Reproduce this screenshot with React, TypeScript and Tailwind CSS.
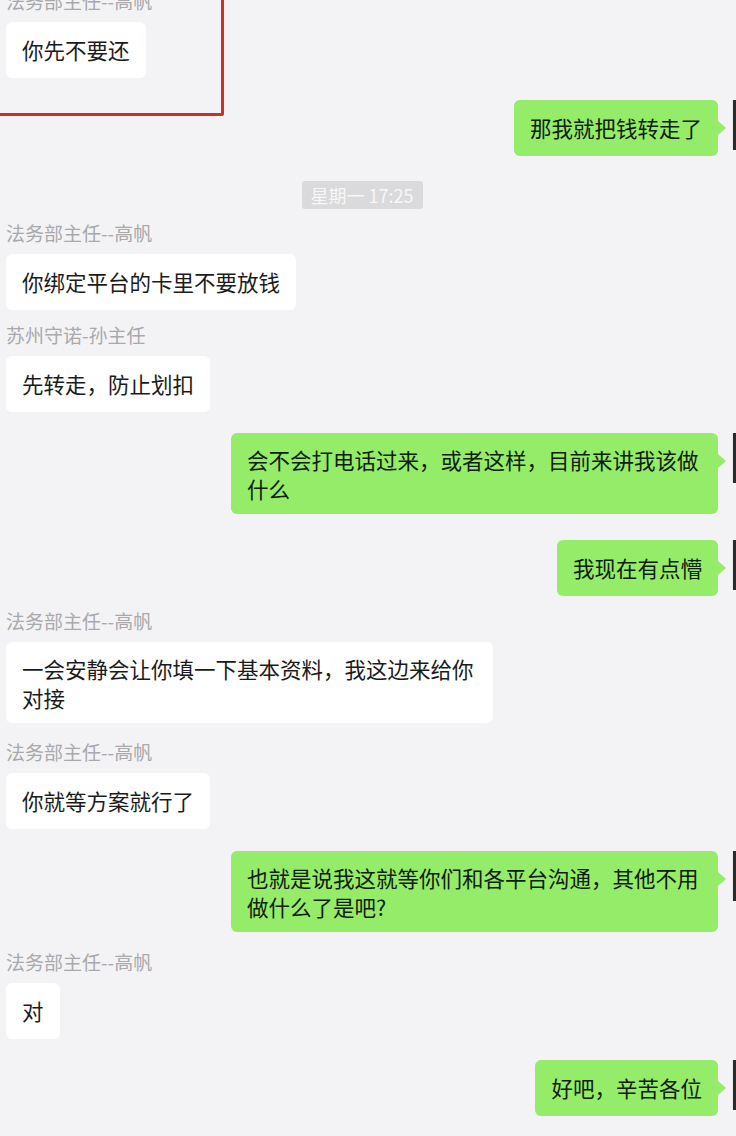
import React from "react";

type Msg =
  | { kind: "left"; name: string; text: string; multi?: boolean; mt: string; first?: boolean }
  | { kind: "right"; text: string; multi?: boolean; mt: string }
  | { kind: "time"; text: string; mt: string };

const FONT = { fontFamily: '"Noto Sans CJK SC", "Noto Sans", sans-serif' };

const messages: Msg[] = [
  { kind: "left", name: "法务部主任--高帆", text: "你先不要还", mt: "mt-[-9px]", first: true },
  { kind: "right", text: "那我就把钱转走了", mt: "mt-[22px]" },
  { kind: "time", text: "星期一 17:25", mt: "mt-[25px]" },
  { kind: "left", name: "法务部主任--高帆", text: "你绑定平台的卡里不要放钱", mt: "mt-[14px]" },
  { kind: "left", name: "苏州守诺-孙主任", text: "先转走，防止划扣", mt: "mt-[15px]" },
  { kind: "right", text: "会不会打电话过来，或者这样，目前来讲我该做什么", multi: true, mt: "mt-[21px]" },
  { kind: "right", text: "我现在有点懵", mt: "mt-[26px]" },
  { kind: "left", name: "法务部主任--高帆", text: "一会安静会让你填一下基本资料，我这边来给你对接", multi: true, mt: "mt-[15px]" },
  { kind: "left", name: "法务部主任--高帆", text: "你就等方案就行了", mt: "mt-[19px]" },
  { kind: "right", text: "也就是说我这就等你们和各平台沟通，其他不用做什么了是吧?", multi: true, mt: "mt-[22px]" },
  { kind: "left", name: "法务部主任--高帆", text: "对", mt: "mt-[20px]" },
  { kind: "right", text: "好吧，辛苦各位", mt: "mt-[21px]" },
];

function Bubble({ text, multi, green }: { text: string; multi?: boolean; green?: boolean }) {
  const pad = multi ? "py-[11.5px] leading-[29px]" : "py-[13px] leading-[30px]";
  const color = green ? "bg-[#95ec69] text-[#0f200c]" : "bg-white text-[#1b1b1b]";
  return (
    <div className={`max-w-[487px] rounded-[6px] px-[16px] text-[21.5px] ${pad} ${color}`}>
      {text}
    </div>
  );
}

export default function App() {
  return (
    <div
      className="relative w-[736px] h-[1136px] overflow-hidden bg-[#f3f3f5]"
      style={FONT}
    >
      <div className="flex flex-col">
        {messages.map((m, i) => {
          if (m.kind === "time") {
            return (
              <div key={i} className={`flex justify-center ${m.mt}`}>
                <div className="mr-[12px] h-[28px] px-[9px] rounded-[3px] bg-[#dadadc] text-[#f7f7f7] text-[18px] leading-[28px]">
                  {m.text}
                </div>
              </div>
            );
          }
          if (m.kind === "left") {
            return (
              <div key={i} className={`flex flex-col items-start pl-[6px] ${m.mt}`}>
                <div className="h-[20px] text-[19px] leading-[20px] text-[#a9a9ab]">{m.name}</div>
                <div className="mt-[11px]">
                  <Bubble text={m.text} multi={m.multi} />
                </div>
              </div>
            );
          }
          return (
            <div key={i} className={`flex justify-end items-start ${m.mt}`}>
              <Bubble text={m.text} multi={m.multi} green />
              <div className="mt-[21px] w-0 h-0 border-y-[7px] border-y-transparent border-l-[8px] border-l-[#95ec69]" />
              <div className="ml-[6px] w-[1px] h-[50px] bg-[#e8e8e8]" />
              <div className="w-[3px] h-[50px] bg-[#2b2b2b]" />
            </div>
          );
        })}
      </div>
      <div className="absolute left-[-3px] top-[-3px] w-[227px] h-[119px] border-[3px] border-[#c9302c] rounded-[2px] pointer-events-none" />
    </div>
  );
}
